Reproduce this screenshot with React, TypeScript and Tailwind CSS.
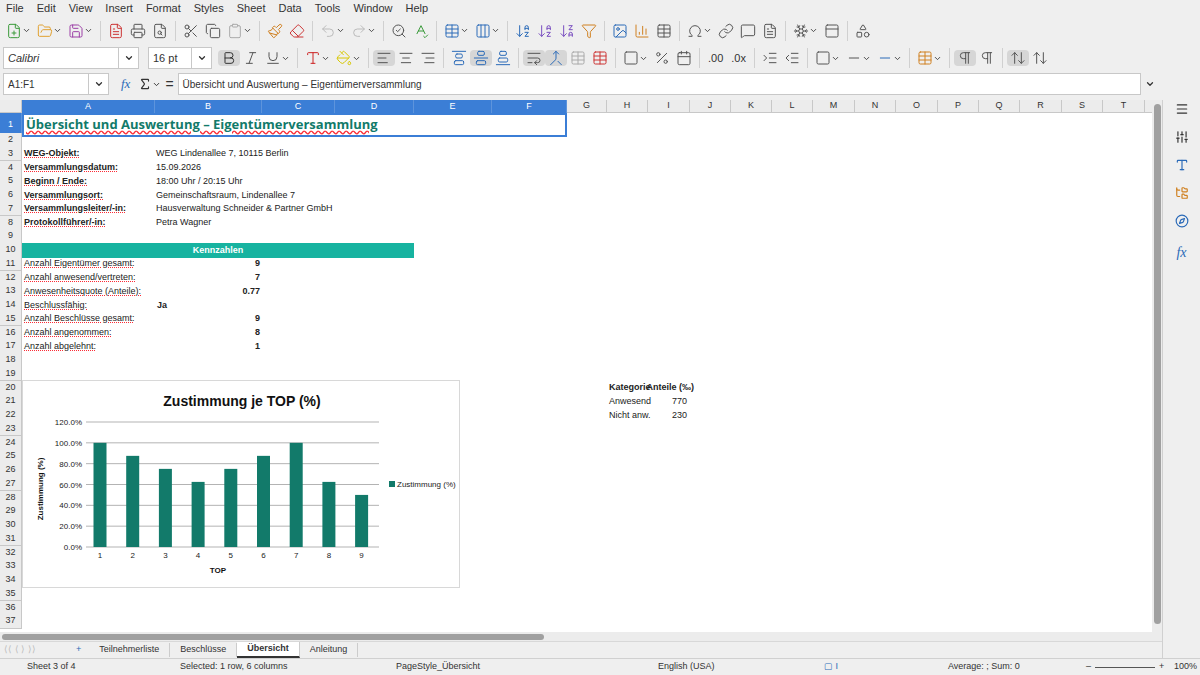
import {
  FilePlus, FolderOpen, Save, FileText, Printer, FileSearch, Scissors, Copy, Clipboard, Paintbrush, Eraser,
  Undo2, Redo2, SearchCheck, SpellCheck, Table, Columns3, ArrowDownAZ, ArrowDownZA, Filter, Image, BarChart3,
  Omega, Link, MessageSquare, FileText as Note, Snowflake, PanelTop, Shapes, ChevronDown, Bold, Italic, Underline,
  AlignLeft, AlignCenter, AlignRight, AlignVerticalJustifyStart, AlignVerticalJustifyCenter, AlignVerticalJustifyEnd,
  WrapText, Merge, Percent, Calendar, Indent, Outdent, Square, Minus, PaintBucket, Pilcrow, ArrowUpDown,
  Menu, Sliders, Type, FolderTree, Compass, Sigma,
} from "lucide-react";

const font = { fontFamily: '"Liberation Sans", Arial, sans-serif' };
const cols = ["A","B","C","D","E","F","G","H","I","J","K","L","M","N","O","P","Q","R","S","T"];
const widths = [133,107,73,79,78,75,40,41,42,41,41,41,42,41,42,41,41,42,41,42];
const rowH = (r: number) => (r === 1 ? 20 : 13.76);
const bars = [100, 87.5, 75, 62.5, 75, 87.5, 100, 62.5, 50];

const info: [string, string][] = [
  ["WEG-Objekt:", "WEG Lindenallee 7, 10115 Berlin"],
  ["Versammlungsdatum:", "15.09.2026"],
  ["Beginn / Ende:", "18:00 Uhr / 20:15 Uhr"],
  ["Versammlungsort:", "Gemeinschaftsraum, Lindenallee 7"],
  ["Versammlungsleiter/-in:", "Hausverwaltung Schneider & Partner GmbH"],
  ["Protokollführer/-in:", "Petra Wagner"],
];
const kz: [string, string, boolean?][] = [
  ["Anzahl Eigentümer gesamt:", "9"],
  ["Anzahl anwesend/vertreten:", "7"],
  ["Anwesenheitsquote (Anteile):", "0.77"],
  ["Beschlussfähig:", "Ja", true],
  ["Anzahl Beschlüsse gesamt:", "9"],
  ["Anzahl angenommen:", "8"],
  ["Anzahl abgelehnt:", "1"],
];

function Cells({ r }: { r: number }) {
  const cell = "flex min-w-0 items-center overflow-visible whitespace-nowrap text-[9px] text-[#222]";
  if (r === 1)
    return (
      <div className="col-start-2 col-span-6 flex items-center border-2 border-[#3b7ed6] pl-0.5 text-[13px] font-bold text-[#127a6a] underline decoration-wavy decoration-red-500" style={{ fontFamily: '"Open Sans", sans-serif' }}>
        Übersicht und Auswertung – Eigentümerversammlung
      </div>
    );
  if (r >= 3 && r <= 8) {
    const [a, b] = info[r - 3];
    return (
      <>
        <div className={`${cell} col-start-2 pl-0.5 font-bold underline decoration-dotted decoration-red-500`}>{a}</div>
        <div className={`${cell} col-start-3 col-span-3 justify-start pl-px`}>{b}</div>
      </>
    );
  }
  if (r === 10)
    return <div className="col-start-2 col-span-4 flex items-center justify-center bg-[#17b3a0] text-[9px] font-bold text-white">Kennzahlen</div>;
  if (r >= 11 && r <= 17) {
    const [a, b, left] = kz[r - 11];
    return (
      <>
        <div className={`${cell} col-start-2 pl-0.5 underline decoration-dotted decoration-red-500`}>{a}</div>
        <div className={`${cell} col-start-3 font-bold ${left ? "justify-start pl-0.5" : "justify-end pr-0.5"}`}>{b}</div>
      </>
    );
  }
  if (r >= 20 && r <= 22) {
    const t = [["Kategorie", "Anteile (‰)"], ["Anwesend", "770"], ["Nicht anw.", "230"]][r - 20];
    return (
      <div className="col-start-9 col-span-2 flex items-center">
        <span className={`${cell} pl-0.5 ${r === 20 ? "font-bold" : ""} w-[41px] overflow-hidden`}>{t[0]}</span>
        <span className={`${cell} ${r === 20 ? "font-bold pl-0.5" : "pl-6"}`}>{t[1]}</span>
      </div>
    );
  }
  return null;
}

function Chart() {
  const x0 = 63, y0 = 166, h = 125;
  return (
    <div className="absolute left-[22px] top-[280px] h-[208px] w-[438px] border border-[#d8d8d8] bg-white">
      <svg width="438" height="208" style={font}>
        <text x="219" y="25" textAnchor="middle" fontSize="14" fontWeight="bold" fill="#111">Zustimmung je TOP (%)</text>
        {[0, 1, 2, 3, 4, 5, 6].map((i) => {
          const y = y0 - (i * h) / 6;
          return (
            <g key={i}>
              <line x1={x0} x2={356} y1={y} y2={y} stroke="#b3b3b3" strokeWidth="1" />
              <text x={x0 - 4} y={y + 3} textAnchor="end" fontSize="8" fill="#222">{(i * 20).toFixed(1)}%</text>
            </g>
          );
        })}
        {bars.map((v, i) => {
          const cx = 77 + i * 32.7;
          const bh = (v / 120) * h;
          return (
            <g key={i}>
              <rect x={cx - 6.5} y={y0 - bh} width="13" height={bh} fill="#127a6a" />
              <text x={cx} y={y0 + 11} textAnchor="middle" fontSize="8" fill="#222">{i + 1}</text>
            </g>
          );
        })}
        <text x="195" y="192" textAnchor="middle" fontSize="8" fontWeight="bold" fill="#111">TOP</text>
        <text transform="translate(20 108) rotate(-90)" textAnchor="middle" fontSize="8" fontWeight="bold" fill="#111">Zustimmung (%)</text>
        <rect x="366" y="100" width="6" height="6" fill="#127a6a" />
        <text x="374" y="106" fontSize="8" fill="#222">Zustimmung (%)</text>
      </svg>
    </div>
  );
}

const Ico = ({ I, c = "#555", dd }: { I: any; c?: string; dd?: boolean }) => (
  <div className="flex items-center px-[3px]">
    <I size={16} color={c} strokeWidth={1.5} />
    {dd && <ChevronDown size={9} color="#444" strokeWidth={2.5} />}
  </div>
);
const Sep = () => <div className="mx-1 h-5 w-px bg-[#d0d0d0]" />;

export default function App() {
  const rows = Array.from({ length: 37 }, (_, i) => i + 1);
  const gridCols = widths.map((w) => `${w}px`).join(" ") + " 1fr";
  return (
    <div className="flex h-[675px] w-[1200px] flex-col overflow-hidden bg-[#efefef] text-[#333]" style={font}>
      <div className="flex h-[17px] items-center gap-[13px] px-[6px] text-[11px]">
        {["File","Edit","View","Insert","Format","Styles","Sheet","Data","Tools","Window","Help"].map((m) => <span key={m}>{m}</span>)}
      </div>
      <div className="flex h-[27px] items-center px-[3px]">
        <Ico I={FilePlus} c="#3a9a3a" dd /><Ico I={FolderOpen} c="#e0a030" dd /><Ico I={Save} c="#9c3fa6" dd /><Sep />
        <Ico I={FileText} c="#c33" /><Ico I={Printer} /><Ico I={FileSearch} /><Sep />
        <Ico I={Scissors} /><Ico I={Copy} /><Ico I={Clipboard} c="#aaa" dd /><Sep />
        <Ico I={Paintbrush} c="#d08020" /><Ico I={Eraser} c="#c33" /><Sep />
        <Ico I={Undo2} c="#bbb" dd /><Ico I={Redo2} c="#bbb" dd /><Sep />
        <Ico I={SearchCheck} /><Ico I={SpellCheck} c="#3a9a3a" /><Sep />
        <Ico I={Table} c="#2a6ab8" dd /><Ico I={Columns3} c="#2a6ab8" dd /><Sep />
        <Ico I={ArrowDownAZ} c="#2a6ab8" /><Ico I={ArrowDownAZ} c="#7a4fc0" /><Ico I={ArrowDownZA} c="#7a4fc0" /><Ico I={Filter} c="#d08020" /><Sep />
        <Ico I={Image} c="#2a6ab8" /><Ico I={BarChart3} c="#d08020" /><Ico I={Table} /><Sep />
        <Ico I={Omega} dd /><Ico I={Link} /><Ico I={MessageSquare} /><Ico I={Note} /><Sep />
        <Ico I={Snowflake} dd /><Ico I={PanelTop} /><Sep /><Ico I={Shapes} />
      </div>
      <div className="flex h-[28px] items-center px-[3px]">
        <div className="flex h-[22px] w-[136px] items-center justify-between border border-[#c8c8c8] bg-white pl-1 text-[11px] italic">
          Calibri<div className="flex h-full w-[20px] items-center justify-center border-l border-[#c8c8c8]"><ChevronDown size={10} strokeWidth={3} /></div>
        </div>
        <div className="ml-[9px] flex h-[22px] w-[64px] items-center justify-between border border-[#c8c8c8] bg-white pl-1 text-[11px]">
          16 pt<div className="flex h-full w-[20px] items-center justify-center border-l border-[#c8c8c8]"><ChevronDown size={10} strokeWidth={3} /></div>
        </div>
        <div className="ml-[6px] rounded bg-[#d6d6d6]"><Ico I={Bold} c="#333" /></div>
        <Ico I={Italic} /><Ico I={Underline} dd /><Sep />
        <Ico I={Type} c="#c22" dd /><Ico I={PaintBucket} c="#d8c800" dd /><Sep />
        <div className="rounded bg-[#d6d6d6]"><Ico I={AlignLeft} /></div><Ico I={AlignCenter} /><Ico I={AlignRight} /><Sep />
        <Ico I={AlignVerticalJustifyStart} c="#2a6ab8" /><div className="rounded bg-[#d6d6d6]"><Ico I={AlignVerticalJustifyCenter} c="#2a6ab8" /></div><Ico I={AlignVerticalJustifyEnd} c="#2a6ab8" /><Sep />
        <div className="rounded bg-[#d6d6d6]"><Ico I={WrapText} /></div><div className="rounded bg-[#d6d6d6]"><Ico I={Merge} c="#2a6ab8" /></div><Ico I={Table} c="#aaa" /><Ico I={Table} c="#c33" /><Sep />
        <Ico I={Square} dd /><Ico I={Percent} /><Ico I={Calendar} /><Sep />
        <span className="px-1 text-[11px]">.00</span><span className="px-1 text-[11px]">.0x</span><Sep />
        <Ico I={Indent} /><Ico I={Outdent} /><Sep />
        <Ico I={Square} dd /><Ico I={Minus} dd /><Ico I={Minus} c="#2a6ab8" dd /><Sep />
        <Ico I={Table} c="#d08020" dd /><Sep />
        <div className="rounded bg-[#d6d6d6]"><Ico I={Pilcrow} /></div><Ico I={Pilcrow} /><Sep />
        <div className="rounded bg-[#d6d6d6]"><Ico I={ArrowUpDown} /></div><Ico I={ArrowUpDown} />
      </div>
      <div className="flex h-[24px] items-center px-[3px]">
        <div className="flex h-[22px] w-[106px] items-center justify-between border border-[#c8c8c8] bg-white pl-1 text-[10px]">
          A1:F1<div className="flex h-full w-[20px] items-center justify-center border-l border-[#c8c8c8]"><ChevronDown size={10} strokeWidth={3} /></div>
        </div>
        <span className="ml-3 text-[13px] italic text-[#2a6ab8]" style={{ fontFamily: "serif" }}>fx</span>
        <Sigma size={14} className="ml-2" /><ChevronDown size={9} strokeWidth={2.5} />
        <span className="ml-1 text-[14px]">=</span>
        <div className="ml-1 flex h-[22px] flex-1 items-center border border-[#c8c8c8] bg-white pl-1 text-[10px]">Übersicht und Auswertung – Eigentümerversammlung</div>
        <ChevronDown size={10} strokeWidth={3} className="mx-1" />
        <div className="w-[38px]" />
      </div>
      <div className="flex flex-1 pt-[4px]">
        <div className="flex flex-1 flex-col">
          <div className="flex flex-1">
            <div className="relative flex-1 overflow-hidden bg-white">
              <div className="grid" style={{ gridTemplateColumns: `22px ${gridCols}` }}>
                <div className="h-[13px] border-b border-r border-[#c8c8c8] bg-[#ececec]" />
                {cols.map((c, i) => (
                  <div key={c} className={`flex h-[13px] items-center justify-center border-r text-[9px] ${i < 6 ? "border-[#5d94dc] bg-[#3b7ed6] text-white" : "border-[#c8c8c8] bg-[#ececec] border-b"}`}>{c}</div>
                ))}
                <div className="h-[13px] border-b border-[#c8c8c8] bg-[#ececec]" />
              </div>
              {rows.map((r) => (
                <div key={r} className="grid" style={{ gridTemplateColumns: `22px ${gridCols}`, height: rowH(r) }}>
                  <div className={`col-start-1 flex items-center justify-center border-b border-r text-[9px] ${r === 1 ? "border-[#5d94dc] bg-[#3b7ed6] text-white" : "border-[#c8c8c8] bg-[#ececec]"}`}>{r}</div>
                  <Cells r={r} />
                </div>
              ))}
              <Chart />
            </div>
            <div className="flex w-[10px] flex-col bg-[#ececec]">
              <div className="mx-auto mt-1 h-[520px] w-[7px] rounded bg-[#a0a0a0]" />
            </div>
          </div>
          <div className="flex h-[9px] items-center bg-[#ececec]"><div className="ml-[2px] h-[6px] w-[542px] rounded bg-[#a0a0a0]" /></div>
          <div className="flex h-[17px] items-center border-t border-[#d8d8d8] text-[9px]">
            <span className="w-[68px] pl-1 text-[#bbb]">⟨⟨ ⟨ ⟩ ⟩⟩</span>
            <span className="mx-2 text-[#2a6ab8]">+</span>
            {["Teilnehmerliste", "Beschlüsse", "Übersicht", "Anleitung"].map((t) => (
              <span key={t} className={`border-r border-[#ccc] px-[10px] ${t === "Übersicht" ? "border-b-2 border-b-[#333] bg-white font-bold" : ""}`}>{t}</span>
            ))}
          </div>
        </div>
        <div className="flex w-[38px] flex-col items-center gap-[14px] border-l border-[#d0d0d0] pt-[2px]">
          <Menu size={14} /><Sliders size={14} /><Type size={14} color="#2a6ab8" /><FolderTree size={14} color="#d08020" /><Compass size={14} color="#2a6ab8" />
          <span className="text-[14px] italic text-[#2a6ab8]" style={{ fontFamily: "serif" }}>fx</span>
        </div>
      </div>
      <div className="flex h-[17px] items-center border-t border-[#d0d0d0] text-[9px]">
        <span className="w-[180px] pl-[27px]">Sheet 3 of 4</span>
        <span className="w-[216px]">Selected: 1 row, 6 columns</span>
        <span className="w-[262px]">PageStyle_Übersicht</span>
        <span className="w-[166px]">English (USA)</span>
        <span className="w-[124px] text-[#2a6ab8]">▢ I</span>
        <span className="w-[138px]">Average: ; Sum: 0</span>
        <span className="flex w-[88px] items-center gap-1">– <span className="h-px w-[60px] bg-[#555]" /> +</span>
        <span>100%</span>
      </div>
    </div>
  );
}
